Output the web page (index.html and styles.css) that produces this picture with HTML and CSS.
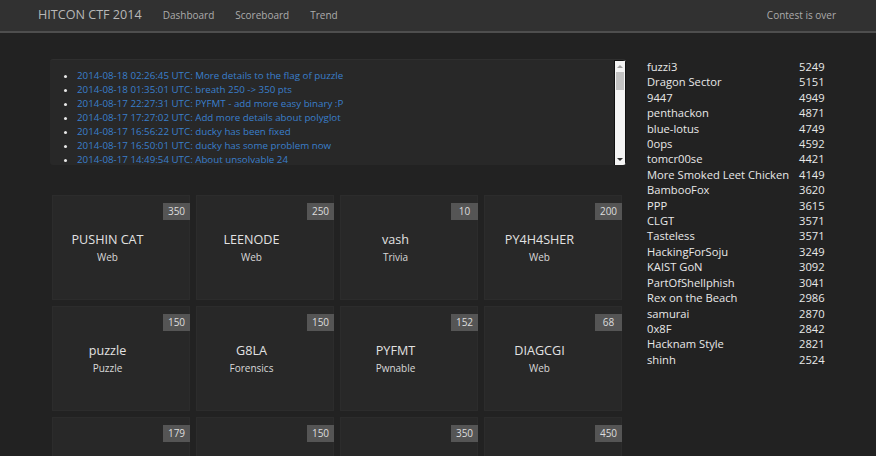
FILE: index.html
```html
<!DOCTYPE html>
<html>
<head>
<meta charset="utf-8">
<link rel="stylesheet" href="styles.css">
</head>
<body>
<nav class="navbar">
  <span class="brand">HITCON CTF 2014</span>
  <span class="nav-link">Dashboard</span>
  <span class="nav-link">Scoreboard</span>
  <span class="nav-link">Trend</span>
  <span class="nav-right">Contest is over</span>
</nav>
<main class="main">
  <section class="left">
    <div class="news">
      <ul class="news-list">
        <li>2014-08-18 02:26:45 UTC: More details to the flag of puzzle</li>
        <li>2014-08-18 01:35:01 UTC: breath 250 -&gt; 350 pts</li>
        <li>2014-08-17 22:27:31 UTC: PYFMT - add more easy binary :P</li>
        <li>2014-08-17 17:27:02 UTC: Add more details about polyglot</li>
        <li>2014-08-17 16:56:22 UTC: ducky has been fixed</li>
        <li>2014-08-17 16:50:01 UTC: ducky has some problem now</li>
        <li>2014-08-17 14:49:54 UTC: About unsolvable 24</li>
      </ul>
      <div class="scrollbar">
        <span class="arrow-up"></span>
        <span class="thumb"></span>
        <span class="arrow-down"></span>
      </div>
    </div>
    <div class="cards">
      <div class="card"><div class="info"><div class="title">PUSHIN CAT</div><div class="cat">Web</div></div><span class="badge">350</span></div>
      <div class="card"><div class="info"><div class="title">LEENODE</div><div class="cat">Web</div></div><span class="badge">250</span></div>
      <div class="card"><div class="info"><div class="title">vash</div><div class="cat">Trivia</div></div><span class="badge">10</span></div>
      <div class="card"><div class="info"><div class="title">PY4H4SHER</div><div class="cat">Web</div></div><span class="badge">200</span></div>
      <div class="card"><div class="info"><div class="title">puzzle</div><div class="cat">Puzzle</div></div><span class="badge">150</span></div>
      <div class="card"><div class="info"><div class="title">G8LA</div><div class="cat">Forensics</div></div><span class="badge">150</span></div>
      <div class="card"><div class="info"><div class="title">PYFMT</div><div class="cat">Pwnable</div></div><span class="badge">152</span></div>
      <div class="card"><div class="info"><div class="title">DIAGCGI</div><div class="cat">Web</div></div><span class="badge">68</span></div>
      <div class="card"><div class="info"><div class="title">rsaha</div><div class="cat">Crypto</div></div><span class="badge">179</span></div>
      <div class="card"><div class="info"><div class="title">ty</div><div class="cat">Reverse</div></div><span class="badge">150</span></div>
      <div class="card"><div class="info"><div class="title">polyglot</div><div class="cat">Misc</div></div><span class="badge">350</span></div>
      <div class="card"><div class="info"><div class="title">ducky</div><div class="cat">Misc</div></div><span class="badge">450</span></div>
    </div>
  </section>
  <aside class="scores">
    <span>fuzzi3</span><span>5249</span>
    <span>Dragon Sector</span><span>5151</span>
    <span>9447</span><span>4949</span>
    <span>penthackon</span><span>4871</span>
    <span>blue-lotus</span><span>4749</span>
    <span>0ops</span><span>4592</span>
    <span>tomcr00se</span><span>4421</span>
    <span>More Smoked Leet Chicken</span><span>4149</span>
    <span>BambooFox</span><span>3620</span>
    <span>PPP</span><span>3615</span>
    <span>CLGT</span><span>3571</span>
    <span>Tasteless</span><span>3571</span>
    <span>HackingForSoju</span><span>3249</span>
    <span>KAIST GoN</span><span>3092</span>
    <span>PartOfShellphish</span><span>3041</span>
    <span>Rex on the Beach</span><span>2986</span>
    <span>samurai</span><span>2870</span>
    <span>0x8F</span><span>2842</span>
    <span>Hacknam Style</span><span>2821</span>
    <span>shinh</span><span>2524</span>
  </aside>
</main>
</body>
</html>
```
FILE: styles.css
```css
html, body {
  margin: 0;
  padding: 0;
}
body {
  background: #222222;
  font-family: "Open Sans", "Noto Sans", sans-serif;
  color: #e0e0e0;
  overflow: hidden;
}
.navbar {
  display: flex;
  align-items: center;
  box-sizing: border-box;
  height: 33px;
  background: #313131;
  border-bottom: 2px solid #4e4e4e;
  padding: 0 40px 2px 38px;
  gap: 21px;
}
.brand {
  font-size: 12.6px;
  color: #b8b8b8;
}
.nav-link {
  font-size: 10px;
  color: #acacac;
}
.nav-right {
  margin-left: auto;
  font-size: 10px;
  color: #acacac;
}
.main {
  display: flex;
  align-items: flex-start;
  padding: 26px 0 0 50px;
  gap: 21px;
}
.left {
  width: 576px;
  display: flex;
  flex-direction: column;
}
.news {
  position: relative;
  height: 106px;
  background: #282828;
  border-top: 1px solid #2f2f2f;
  border-radius: 3px;
  overflow: hidden;
  box-sizing: border-box;
}
.news-list {
  margin: 0;
  padding: 9px 0 0 27px;
  font-size: 9.75px;
  line-height: 14px;
  color: #3a7fcb;
}
.news-list li::marker {
  color: #e8e8e8;
}
.scrollbar {
  position: absolute;
  top: 0;
  right: 0;
  width: 10px;
  height: 104px;
  background: #f4f4f4;
  border: 1px solid #111;
}
.thumb {
  position: absolute;
  left: 1px;
  top: 11px;
  width: 8px;
  height: 18px;
  background: #c2c2c2;
}
.arrow-up {
  position: absolute;
  left: 2px;
  top: 4px;
  border-left: 3px solid transparent;
  border-right: 3px solid transparent;
  border-bottom: 3px solid #a0a0a0;
}
.arrow-down {
  position: absolute;
  left: 2px;
  bottom: 4px;
  border-left: 3px solid transparent;
  border-right: 3px solid transparent;
  border-top: 3px solid #333;
}
.cards {
  display: grid;
  grid-template-columns: repeat(4, 138px);
  grid-auto-rows: 105px;
  gap: 6px;
  margin-top: 30px;
  padding-left: 2px;
}
.card {
  display: flex;
  align-items: flex-start;
  background: #282828;
  box-shadow: inset 0 0 0 1px #2c2c2c;
}
.info {
  flex: 1;
  text-align: center;
  padding-top: 36px;
}
.title {
  font-size: 12.6px;
  line-height: 18px;
  color: #e2e2e2;
}
.cat {
  font-size: 10px;
  line-height: 14px;
  margin-top: 1px;
  color: #d8d8d8;
}
.badge {
  width: 27px;
  height: 17px;
  line-height: 17px;
  margin-top: 8px;
  text-align: center;
  font-size: 10px;
  background: #555555;
  color: #dddddd;
}
.scores {
  display: grid;
  grid-template-columns: 152px auto;
  font-size: 11.2px;
  line-height: 15.4px;
  color: #e8e8e8;
  margin-top: 0;
}
```
